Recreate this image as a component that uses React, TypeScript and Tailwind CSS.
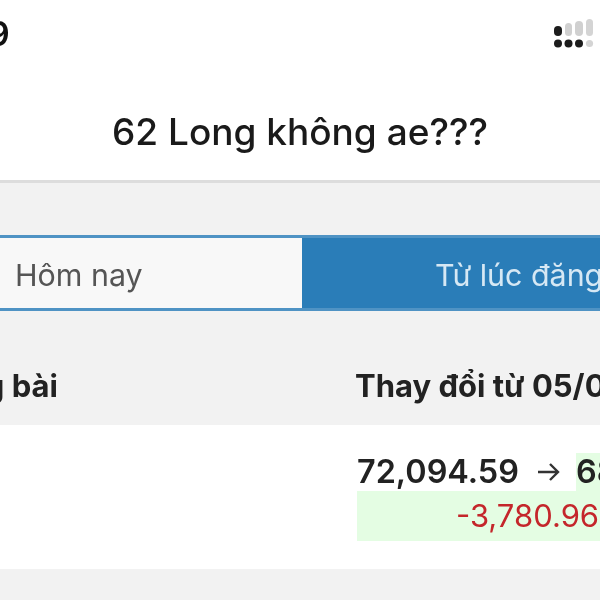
import React from "react";

const SignalIcon = () => (
  <svg width="40" height="29" viewBox="0 0 40 29" className="block">
    <rect x="0" y="7" width="8" height="10" rx="4" fill="#1c1c1c" />
    <rect x="11" y="4" width="7" height="13" rx="3.5" fill="#d0d0d0" />
    <rect x="21" y="2" width="8" height="15" rx="4" fill="#d0d0d0" />
    <rect x="32" y="0" width="7" height="17" rx="3.5" fill="#d4d4d4" />
    <circle cx="4" cy="24.5" r="4" fill="#1c1c1c" />
    <circle cx="14.5" cy="24.5" r="4" fill="#1c1c1c" />
    <circle cx="25" cy="24.5" r="4" fill="#1c1c1c" />
    <circle cx="35.5" cy="24.5" r="3.6" fill="#d4d4d4" />
  </svg>
);

export default function App() {
  return (
    <div className="w-[600px] h-[600px] overflow-hidden flex flex-col bg-[#f2f2f2] blur-[0.5px] font-['Inter',sans-serif]">
      {/* header */}
      <div className="h-[183px] shrink-0 bg-white border-b-[3px] border-[#dddddd] flex flex-col">
        <div className="h-[66px] flex items-center justify-between pr-[6px]">
          <span className="ml-[-12px] text-[34px] font-semibold text-[#111]">9</span>
          <SignalIcon />
        </div>
        <h1 className="mt-[41px] text-center text-[37px] leading-[50px] font-medium text-[#1a1a1a] whitespace-nowrap">
          62 Long không ae???
        </h1>
      </div>

      {/* tabs */}
      <div className="mt-[52px] h-[76px] shrink-0 flex bg-[#2a7db8] border-y-[3px] border-[#4f93c4] whitespace-nowrap">
        <div className="w-[302px] shrink-0 bg-[#f8f8f8] pl-[15px] pt-[5px] flex items-center text-[30.4px] text-[#555]">
          Hôm nay
        </div>
        <div className="flex-1 pl-[133px] pt-[5px] flex items-center text-[30.4px] text-[#d6e8f4] overflow-hidden">
          Từ lúc đăng bài
        </div>
      </div>

      {/* table head */}
      <div className="h-[114px] shrink-0 flex items-center pt-[36px] whitespace-nowrap text-[31px] font-bold text-[#222]">
        <div className="w-[355px] shrink-0 flex justify-end">
          <span className="mr-[297px]">g bài</span>
        </div>
        <span>Thay đổi từ 05/03</span>
      </div>

      {/* row */}
      <div className="h-[144px] shrink-0 bg-white pl-[357px] pt-[28px] whitespace-nowrap overflow-hidden">
        <div className="flex h-[38px] items-center text-[32.4px] font-semibold text-[#222]">
          <span>72,094.59</span>
          <span className="ml-[18px] w-[23px] font-normal flex">
            <svg width="23" height="20" viewBox="0 0 23 20" fill="none" stroke="#333" strokeWidth="2.4">
              <path d="M1 10h20M13 2l8 8-8 8" />
            </svg>
          </span>
          <span className="ml-[16px] pr-[40px] h-[38px] bg-[#e4fde3] flex items-center">68,313.63</span>
        </div>
        <div className="h-[50px] bg-[#e4fde3] pl-[99px] flex items-center text-[31px] text-[#c4262b]">
          -3,780.96
        </div>
      </div>
    </div>
  );
}
